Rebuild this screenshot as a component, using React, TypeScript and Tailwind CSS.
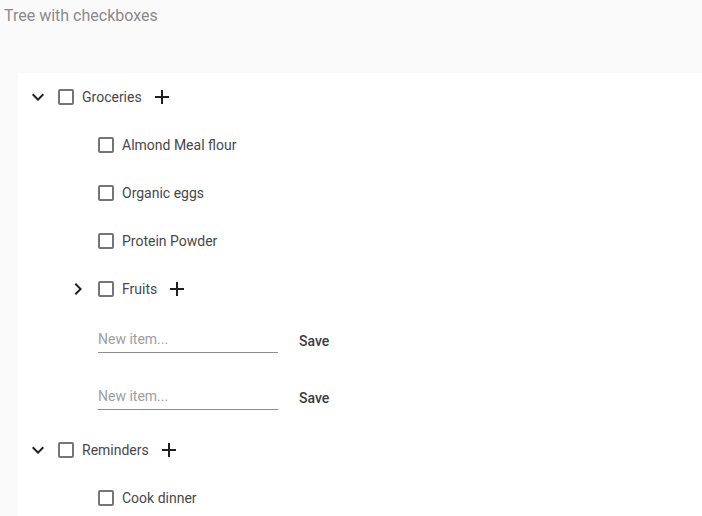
import React from "react";

const font = { fontFamily: "Roboto, 'Noto Sans', Arial, sans-serif" };

function ExpandMore() {
  return (
    <svg width="24" height="24" viewBox="0 0 24 24" fill="#212121">
      <path d="M16.59 8.59L12 13.17 7.41 8.59 6 10l6 6 6-6z" />
    </svg>
  );
}
function ChevronRight() {
  return (
    <svg width="24" height="24" viewBox="0 0 24 24" fill="#212121">
      <path d="M10 6L8.59 7.41 13.17 12l-4.58 4.59L10 18l6-6z" />
    </svg>
  );
}
function Plus() {
  return (
    <svg width="24" height="24" viewBox="0 0 24 24" fill="#212121">
      <path d="M19 13h-6v6h-2v-6H5v-2h6V5h2v6h6v2z" />
    </svg>
  );
}

function Checkbox({ label }: { label: string }) {
  return (
    <label className="flex items-center">
      <span className="w-4 h-4 border-2 border-[#757575] rounded-[2px] mr-2 box-border" />
      <span className="text-[14px] text-[#484848]">{label}</span>
    </label>
  );
}

function IconBtn({ children }: { children?: React.ReactNode }) {
  return <span className="w-10 h-10 flex items-center justify-center shrink-0">{children}</span>;
}

function Node({
  level,
  label,
  toggle,
  add,
}: {
  level: number;
  label: string;
  toggle?: "open" | "closed";
  add?: boolean;
}) {
  return (
    <div className={`flex items-center h-12 ${level === 1 ? "pl-10" : ""}`}>
      <IconBtn>{toggle === "open" ? <ExpandMore /> : toggle === "closed" ? <ChevronRight /> : null}</IconBtn>
      <Checkbox label={label} />
      {add && (
        <IconBtn>
          <Plus />
        </IconBtn>
      )}
    </div>
  );
}

function InputRow({ h }: { h: string }) {
  return (
    <div className={`flex pl-20 ${h}`}>
      <div className="w-[180px] flex flex-col">
        <div className="h-[18px]" />
        <div className="text-[14px] text-[#9e9e9e] leading-[16px] h-[16px]">New item...</div>
        <div className="h-[5px]" />
        <div className="h-px bg-[#8c8c8c]" />
      </div>
      <div className="ml-[21px] pt-[20px] text-[14px] font-medium text-[#3a3a3a] leading-[16px]">Save</div>
    </div>
  );
}

export default function App() {
  return (
    <div className="min-h-screen bg-[#fafafa] overflow-hidden" style={font}>
      <div className="pl-[4px] pt-[6px] h-[73px] text-[16px] leading-[20px] text-[#8a8a8a]">
        Tree with checkboxes
      </div>
      <div className="ml-[18px] bg-white">
        <Node level={0} label="Groceries" toggle="open" add />
        <Node level={1} label="Almond Meal flour" />
        <Node level={1} label="Organic eggs" />
        <Node level={1} label="Protein Powder" />
        <Node level={1} label="Fruits" toggle="closed" add />
        <InputRow h="h-[57px]" />
        <InputRow h="h-[56px]" />
        <Node level={0} label="Reminders" toggle="open" add />
        <Node level={1} label="Cook dinner" />
        <div className="h-12" />
      </div>
    </div>
  );
}
